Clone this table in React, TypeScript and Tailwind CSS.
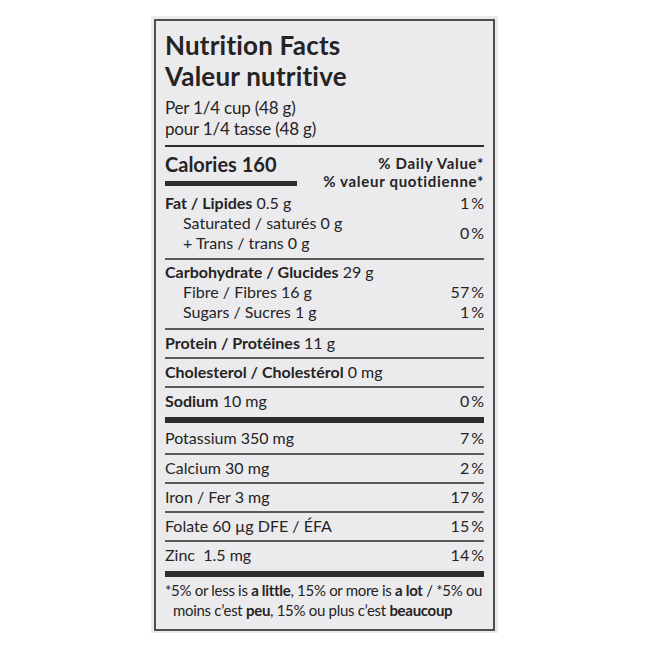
const font = { fontFamily: 'Lato, "Open Sans", sans-serif' };

function Rule() {
  return <div className="h-[2px] bg-[#5a5a5a]" />;
}

function Bar() {
  return <div className="h-[6px] bg-[#2e2e2e]" />;
}

function Row({ label, value, pct, top = 'pt-[3px]', bottom = 'pb-[4px]' }: { label: React.ReactNode; value: string; pct?: string; top?: string; bottom?: string }) {
  return (
    <div className={`flex justify-between text-[16px] leading-[20px] ${top} ${bottom}`}>
      <span>
        {label} {value}
      </span>
      {pct && <span>{pct}</span>}
    </div>
  );
}

export default function App() {
  return (
    <div className="w-[650px] h-[650px] bg-white pl-[151px] pt-[16px]" style={font}>
      <div className="w-[347px] h-[617px] bg-[#ebebed] pl-[3px] pt-[3px]">
        <div className="w-[341px] h-[612px] border-2 border-[#4e4e4e] px-[9px] text-[#262324]">
          <div className="mt-[9px] text-[26px] leading-[31px] font-bold tracking-[0.2px]">
            <div>Nutrition Facts</div>
            <div>Valeur nutritive</div>
          </div>
          <div className="mt-[5px] text-[17px] leading-[21px] tracking-[-0.2px]">
            <div>Per 1/4 cup (48 g)</div>
            <div>pour 1/4 tasse (48 g)</div>
          </div>
          <div className="mt-[6px] h-[2px] bg-[#2e2e2e]" />

          <div className="h-[41px] flex justify-between items-start">
            <div className="pt-[5px]">
              <div className="text-[20px] leading-[24px] font-bold">Calories 160</div>
              <div className="mt-[5px] h-[5px] w-[132px] bg-[#2e2e2e]" />
            </div>
            <div className="pt-[7px] text-right text-[15px] leading-[18px] font-bold tracking-[0.7px]">
              <div>% Daily Value*</div>
              <div>% valeur quotidienne*</div>
            </div>
          </div>

          <div className="pt-[5px] pb-[5px] text-[16px] leading-[20px] flex justify-between">
            <div>
              <div>
                <span className="font-bold">Fat / Lipides</span> 0.5 g
              </div>
              <div className="pl-[18px]">Saturated / saturés 0 g</div>
              <div className="pl-[18px]">+ Trans / trans 0 g</div>
            </div>
            <div className="flex flex-col text-right">
              <div>1&#8201;%</div>
              <div className="mt-[10px]">0&#8201;%</div>
            </div>
          </div>
          <Rule />

          <div className="pt-[2px] pb-[6px] text-[16px] leading-[20px]">
            <div>
              <span className="font-bold">Carbohydrate / Glucides</span> 29 g
            </div>
            <div className="pl-[18px] flex justify-between">
              <span>Fibre / Fibres 16 g</span>
              <span>57&#8201;%</span>
            </div>
            <div className="pl-[18px] flex justify-between">
              <span>Sugars / Sucres 1 g</span>
              <span>1&#8201;%</span>
            </div>
          </div>
          <Rule />

          <Row label={<span className="font-bold">Protein / Protéines</span>} value="11 g" />
          <Rule />
          <Row label={<span className="font-bold">Cholesterol / Cholestérol</span>} value="0 mg" />
          <Rule />
          <Row label={<span className="font-bold">Sodium</span>} value="10 mg" pct={'0\u2009%'} bottom="pb-[6px]" />
          <Bar />

          <Row label="Potassium" value="350 mg" pct={'7\u2009%'} top="pt-[5px]" bottom="pb-[5px]" />
          <Rule />
          <Row label="Calcium" value="30 mg" pct={'2\u2009%'} />
          <Rule />
          <Row label="Iron / Fer" value="3 mg" pct={'17\u2009%'} />
          <Rule />
          <Row label="Folate" value="60 µg DFE / ÉFA" pct={'15\u2009%'} />
          <Rule />
          <Row label={'Zinc\u00a0'} value="1.5 mg" pct={'14\u2009%'} bottom="pb-[6px]" />
          <Bar />

          <div className="mt-[3px] text-[15px] leading-[20px] tracking-[-0.3px] whitespace-nowrap">
            <div>
              *5% or less is <span className="font-bold">a little</span>, 15% or more is{' '}
              <span className="font-bold">a lot</span> / *5% ou
            </div>
            <div className="pl-[8px]">
              moins c’est <span className="font-bold">peu</span>, 15% ou plus c’est{' '}
              <span className="font-bold">beaucoup</span>
            </div>
          </div>
        </div>
      </div>
    </div>
  );
}
